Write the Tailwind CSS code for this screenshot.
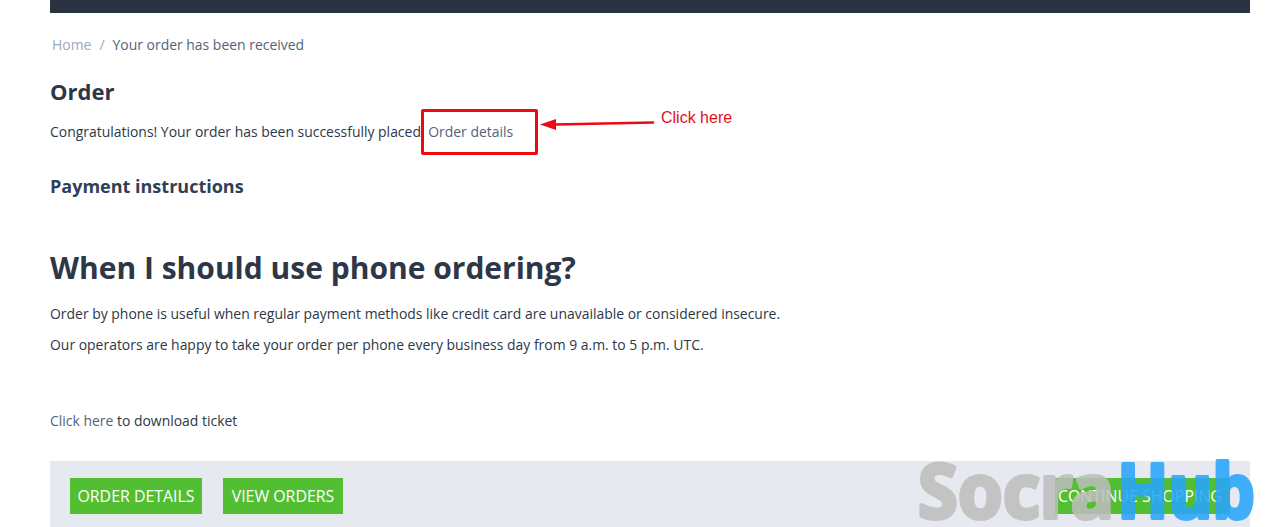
<!DOCTYPE html>
<html lang="en">
<head>
    <meta charset="UTF-8">
    <title>Order</title>
    <script src="https://cdn.jsdelivr.net/npm/@tailwindcss/browser@4"></script>
</head>
<body class="bg-white h-[527px] overflow-hidden relative font-['Open_Sans',sans-serif] text-[#2d3748] text-[13.94px]">
    <div class="mx-[50px] w-[1200px]">
        <!-- Top bar -->
        <div class="h-[13px] bg-[#2a3341]"></div>

        <!-- Breadcrumb -->
        <nav class="flex items-center h-[20px] mt-[22px] ml-[2px] leading-[20px]">
            <a href="#" class="text-[#9aa8ba]">Home</a>
            <span class="text-[#9aa8ba] mx-[8px]">/</span>
            <span class="text-[#51647a]">Your order has been received</span>
        </nav>

        <!-- Order -->
        <h2 class="text-[22px] font-bold leading-[30px] mt-[21px]">Order</h2>
        <p class="leading-[20px] mt-[16px]">Congratulations! Your order has been successfully placed. <a href="#" class="text-[#51647a]">Order details</a></p>
        <h3 class="text-[18px] font-bold leading-[24px] mt-[32px] text-[#2f4056]">Payment instructions</h3>

        <!-- Phone ordering -->
        <h1 class="text-[30px] font-bold leading-[44px] mt-[48px]">When I should use phone ordering?</h1>
        <p class="leading-[20px] mt-[14px]">Order by phone is useful when regular payment methods like credit card are unavailable or considered insecure.</p>
        <p class="leading-[20px] mt-[11px]">Our operators are happy to take your order per phone every business day from 9 a.m. to 5 p.m. UTC.</p>
        <p class="leading-[20px] mt-[56px]"><a href="#" class="text-[#51647a]">Click here</a> to download ticket</p>

        <!-- Actions -->
        <div class="flex justify-between items-start bg-[#e6e9f0] h-[80px] mt-[30px] pt-[17px] pl-[20px] pr-[20px]">
            <div class="flex gap-[21px]">
                <a href="#" class="flex items-center justify-center w-[132px] h-[36px] pt-[2px] bg-[#52be31] text-white text-[15.9px]">ORDER DETAILS</a>
                <a href="#" class="flex items-center justify-center w-[120px] h-[36px] pt-[2px] bg-[#52be31] text-white text-[15.9px]">VIEW ORDERS</a>
            </div>
            <a href="#" class="flex items-center w-[175px] h-[36px] pt-[2px] pl-[3px] bg-[#52be31] text-white text-[15.9px]">CONTINUE SHOPPING</a>
        </div>
    </div>

    <!-- Annotation -->
    <div class="absolute left-[421px] top-[109px] w-[117px] h-[46px] border-[3px] border-[#ee0a14] rounded-[2px]"></div>
    <svg class="absolute left-[538px] top-[114px]" width="120" height="20" viewBox="0 0 120 20">
        <path d="M2 10.5 L18 5 L18 16 Z" fill="#ee0a14"/>
        <path d="M17 10.5 L115 8.5" stroke="#ee0a14" stroke-width="2.5" stroke-linecap="round"/>
    </svg>
    <span class="absolute left-[661px] top-[109px] font-['Liberation_Sans',sans-serif] text-[16px] leading-[18px] text-[#e0101a]">Click here</span>

    <!-- Watermark -->
    <svg class="absolute left-[910px] top-[450px]" width="369" height="77" viewBox="0 0 369 77">
        <text x="8" y="68" opacity="0.85" font-family="Noto Sans" font-weight="700" font-size="76" textLength="196" lengthAdjust="spacingAndGlyphs" fill="#bdbdbd" stroke="#bdbdbd" stroke-width="4" stroke-linejoin="round">Socra</text>
        <text x="207" y="68" opacity="0.88" font-family="Noto Sans" font-weight="700" font-size="76" textLength="138" lengthAdjust="spacingAndGlyphs" fill="#28a5fb" stroke="#28a5fb" stroke-width="4" stroke-linejoin="round">Hub</text>
    </svg>
</body>
</html>
